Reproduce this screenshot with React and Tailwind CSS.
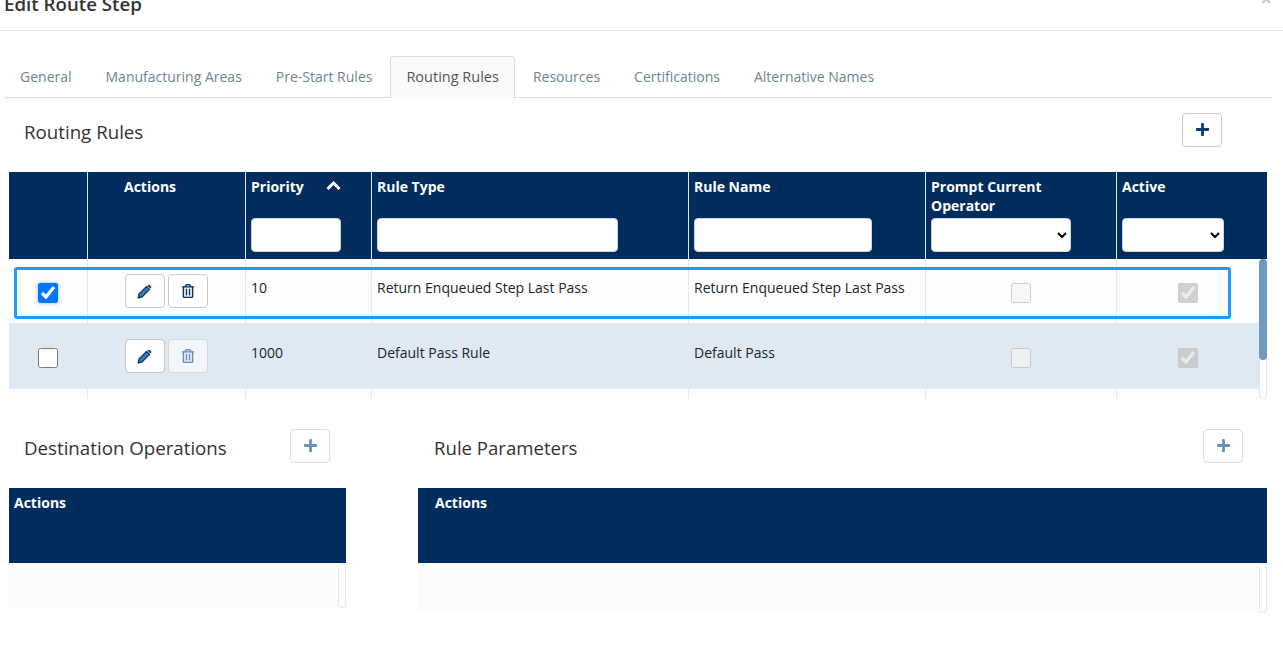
import React from "react";
import { FaRegTrashAlt, FaPlus, FaChevronUp } from "react-icons/fa";

const cols = "grid-cols-[79px_158px_126px_317px_237px_191px_1fr]";

function HeaderCell({ children, className = "" }) {
  return <div className={`relative h-[87px] border-r border-[#e4e8ee] px-[5px] pt-[5px] text-[14px] leading-[19px] font-bold text-white ${className}`}>{children}</div>;
}

function Filter({ w }) {
  return <input readOnly className={`absolute left-[5px] top-[46px] h-[34px] ${w} rounded-[4px] border border-[#ced4da] bg-white`} />;
}

function FilterSelect({ w }) {
  return (
    <select className={`absolute left-[5px] top-[46px] h-[34px] ${w} rounded-[4px] border border-[#ced4da] bg-white text-black`} style={{ appearance: "auto" }}>
      <option></option>
    </select>
  );
}

function PencilIcon() {
  return (
    <svg width="15" height="15" viewBox="0 0 15 15" className="-ml-[1px] text-[#0c3b6e]">
      <path d="M1.2 13.8 L2 10 L9.6 2.4 L12.6 5.4 L5 13 Z" fill="#3f78b4" stroke="currentColor" strokeWidth="1.3" strokeLinejoin="round" />
      <path d="M10.4 1.6 L11.2 0.9 Q11.9 0.4 12.6 0.9 L14.1 2.4 Q14.6 3.1 14.1 3.8 L13.4 4.6 Z" fill="currentColor" />
      <path d="M1.2 13.8 L1.6 11.9 L3.1 13.4 Z" fill="currentColor" stroke="currentColor" strokeWidth="0.6" />
    </svg>
  );
}

function IconButton({ children, faded = false, className = "" }) {
  return (
    <button className={`flex h-[34px] w-[40px] items-center justify-center rounded-[4px] border ${faded ? "border-[#d4d9df] bg-[#f2f6fb] text-[#6a90b6]" : "border-[#c9c9c9] bg-white text-[#0c3b6e]"} ${className}`}>
      {children}
    </button>
  );
}

function PlusButton({ faded = false }) {
  return (
    <button className={`flex h-[34px] w-[40px] items-center justify-center rounded-[4px] border ${faded ? "border-[#dddddd] text-[#6a90b6]" : "border-[#c9c9c9] text-[#0c3b6e]"} bg-white pb-[2px]`}>
      <FaPlus size={15} />
    </button>
  );
}

function Row({ priority, type, name, selected, bg, h, fadedTrash, cls }) {
  const cell = "border-r border-[#e8e8e8]";
  return (
    <div className={`grid ${cols} ${h} ${bg} text-[14px] leading-[19px] text-[#212529]`}>
      <div className={`${cell} flex justify-center ${cls.box}`}>
        <input type="checkbox" readOnly checked={selected} className={`h-5 w-5 ${selected ? "shadow-[0_0_4px_rgba(0,117,255,0.45)]" : ""}`} />
      </div>
      <div className={`${cell} flex justify-center gap-[3px] ${cls.btn}`}>
        <IconButton><PencilIcon /></IconButton>
        <IconButton faded={fadedTrash}><FaRegTrashAlt size={14} stroke="currentColor" strokeWidth={6} /></IconButton>
      </div>
      <div className={`${cell} px-[5px] ${cls.txt}`}>{priority}</div>
      <div className={`${cell} px-[5px] ${cls.txt}`}>{type}</div>
      <div className={`${cell} px-[5px] ${cls.txt}`}>{name}</div>
      <div className={`${cell} flex justify-center ${cls.box}`}>
        <input type="checkbox" disabled readOnly className="h-5 w-5" />
      </div>
      <div className={`flex justify-center pr-[1px] ${cls.box}`}>
        <input type="checkbox" disabled checked readOnly className="h-5 w-5" />
      </div>
    </div>
  );
}

function Scrollbar({ thumb = false }) {
  return (
    <div className="relative w-[8px] shrink-0 rounded-[4px] border border-[#e6e6e6] bg-white">
      {thumb && <div className="absolute -left-px -top-px h-[101px] w-[8px] rounded-[4px] bg-[#6f9abf]" />}
    </div>
  );
}

function SmallTable({ width, bodyH, pad }) {
  return (
    <div className={width}>
      <div className={`h-[75px] bg-[#012d5e] ${pad} pt-[5px] text-[14px] leading-[19px] font-bold text-white`}>Actions</div>
      <div className={`flex ${bodyH} justify-end bg-[#fcfcfc]`}>
        <Scrollbar />
      </div>
    </div>
  );
}

const row1 = { box: "pt-[24px]", btn: "pt-[15px]", txt: "pt-[19px]" };
const row2 = { box: "pt-[25px]", btn: "pt-[16px]", txt: "pt-[20px]" };

export default function App() {
  return (
    <div className="h-[672px] w-[1283px] overflow-hidden bg-white" style={{ fontFamily: '"Open Sans", sans-serif' }}>
      <div className="flex h-[31px] justify-between overflow-hidden border-b border-[#e5e5e5] pl-[4px] pr-[11px]">
        <div className="-mt-[10px] text-[18.72px] leading-[27px] font-semibold text-[#333333]">Edit Route Step</div>
        <div className="-mt-[11px] text-[20px] leading-[20px] font-bold text-[#c8c8c8]">×</div>
      </div>

      <div className="mx-[4px] mt-[25px] flex h-[42px] w-[1268px] items-stretch border-b border-[#dddddd] text-[14px] text-[#6b8494]">
        <div className="px-[16px] pt-[10px]">General</div>
        <div className="ml-[2px] px-[16px] pt-[10px]">Manufacturing Areas</div>
        <div className="ml-[2px] px-[16px] pt-[10px]">Pre-Start Rules</div>
        <div className="-mb-px ml-[2px] rounded-t-[4px] border border-b-0 border-[#dddddd] bg-[#fafafa] px-[15px] pt-[9px] text-[14.5px] font-medium text-[#555555]">Routing Rules</div>
        <div className="ml-[2px] px-[16px] pt-[10px]">Resources</div>
        <div className="ml-[2px] px-[16px] pt-[10px]">Certifications</div>
        <div className="ml-[2px] px-[16px] pt-[10px]">Alternative Names</div>
      </div>

      <div className="flex h-[74px] w-[1222px] items-start justify-between pl-[24px] pt-[15px]">
        <div className="pt-[7px] text-[18.72px] leading-[24px] text-[#333333]">Routing Rules</div>
        <PlusButton />
      </div>

      <div className="ml-[9px] w-[1258px]">
        <div className={`grid ${cols} bg-[#012d5e] `}>
          <HeaderCell />
          <HeaderCell className="pl-[36px]">Actions</HeaderCell>
          <HeaderCell>
            Priority
            <FaChevronUp size={15} stroke="currentColor" strokeWidth={30} className="absolute left-[80px] top-[6px]" />
            <Filter w="w-[90px]" />
          </HeaderCell>
          <HeaderCell>Rule Type<Filter w="w-[241px]" /></HeaderCell>
          <HeaderCell>Rule Name<Filter w="w-[178px]" /></HeaderCell>
          <HeaderCell>Prompt Current<br />Operator<FilterSelect w="w-[140px]" /></HeaderCell>
          <HeaderCell className="border-r-0">Active<FilterSelect w="w-[102px]" /></HeaderCell>
        </div>
        <div className="flex h-[140px]">
          <div className="relative h-full w-[1250px] overflow-hidden bg-[#fdfdfd]">
            <Row priority="10" type="Return Enqueued Step Last Pass" name="Return Enqueued Step Last Pass" selected bg="bg-[#fdfdfd]" h="h-[64px]" cls={row1} />
            <Row priority="1000" type="Default Pass Rule" name="Default Pass" bg="bg-[#dfe9f3]" h="h-[65px]" fadedTrash cls={row2} />
            <div className={`grid ${cols} h-[65px] border-t border-[#eeeeee] bg-[#fdfdfd]`}>
              <div className="border-r border-[#e8e8e8]" />
              <div className="border-r border-[#e8e8e8]" />
              <div className="border-r border-[#e8e8e8]" />
              <div className="border-r border-[#e8e8e8]" />
              <div className="border-r border-[#e8e8e8]" />
              <div className="border-r border-[#e8e8e8]" />
              <div />
            </div>
            <div className="pointer-events-none absolute left-[5px] top-[8px] h-[52px] w-[1217px] rounded-[3px] border-[3px] border-[#1e9bff]" />
          </div>
          <Scrollbar thumb />
        </div>
      </div>

      <div className="mt-[30px] flex">
        <div className="ml-[9px] w-[337px]">
          <div className="flex h-[59px] items-start pl-[15px]">
            <div className="w-[266px] pt-[7px] text-[18.72px] leading-[24px] text-[#333333]">Destination Operations</div>
            <PlusButton faded />
          </div>
          <SmallTable width="w-[337px]" bodyH="h-[45px]" pad="pl-[5px]" />
        </div>
        <div className="ml-[72px] w-[849px]">
          <div className="flex h-[59px] items-start justify-between pl-[16px] pr-[24px]">
            <div className="pt-[7px] text-[18.6px] leading-[24px] text-[#333333]">Rule Parameters</div>
            <PlusButton faded />
          </div>
          <SmallTable width="w-[849px]" bodyH="h-[50px]" pad="pl-[17px]" />
        </div>
      </div>
    </div>
  );
}
